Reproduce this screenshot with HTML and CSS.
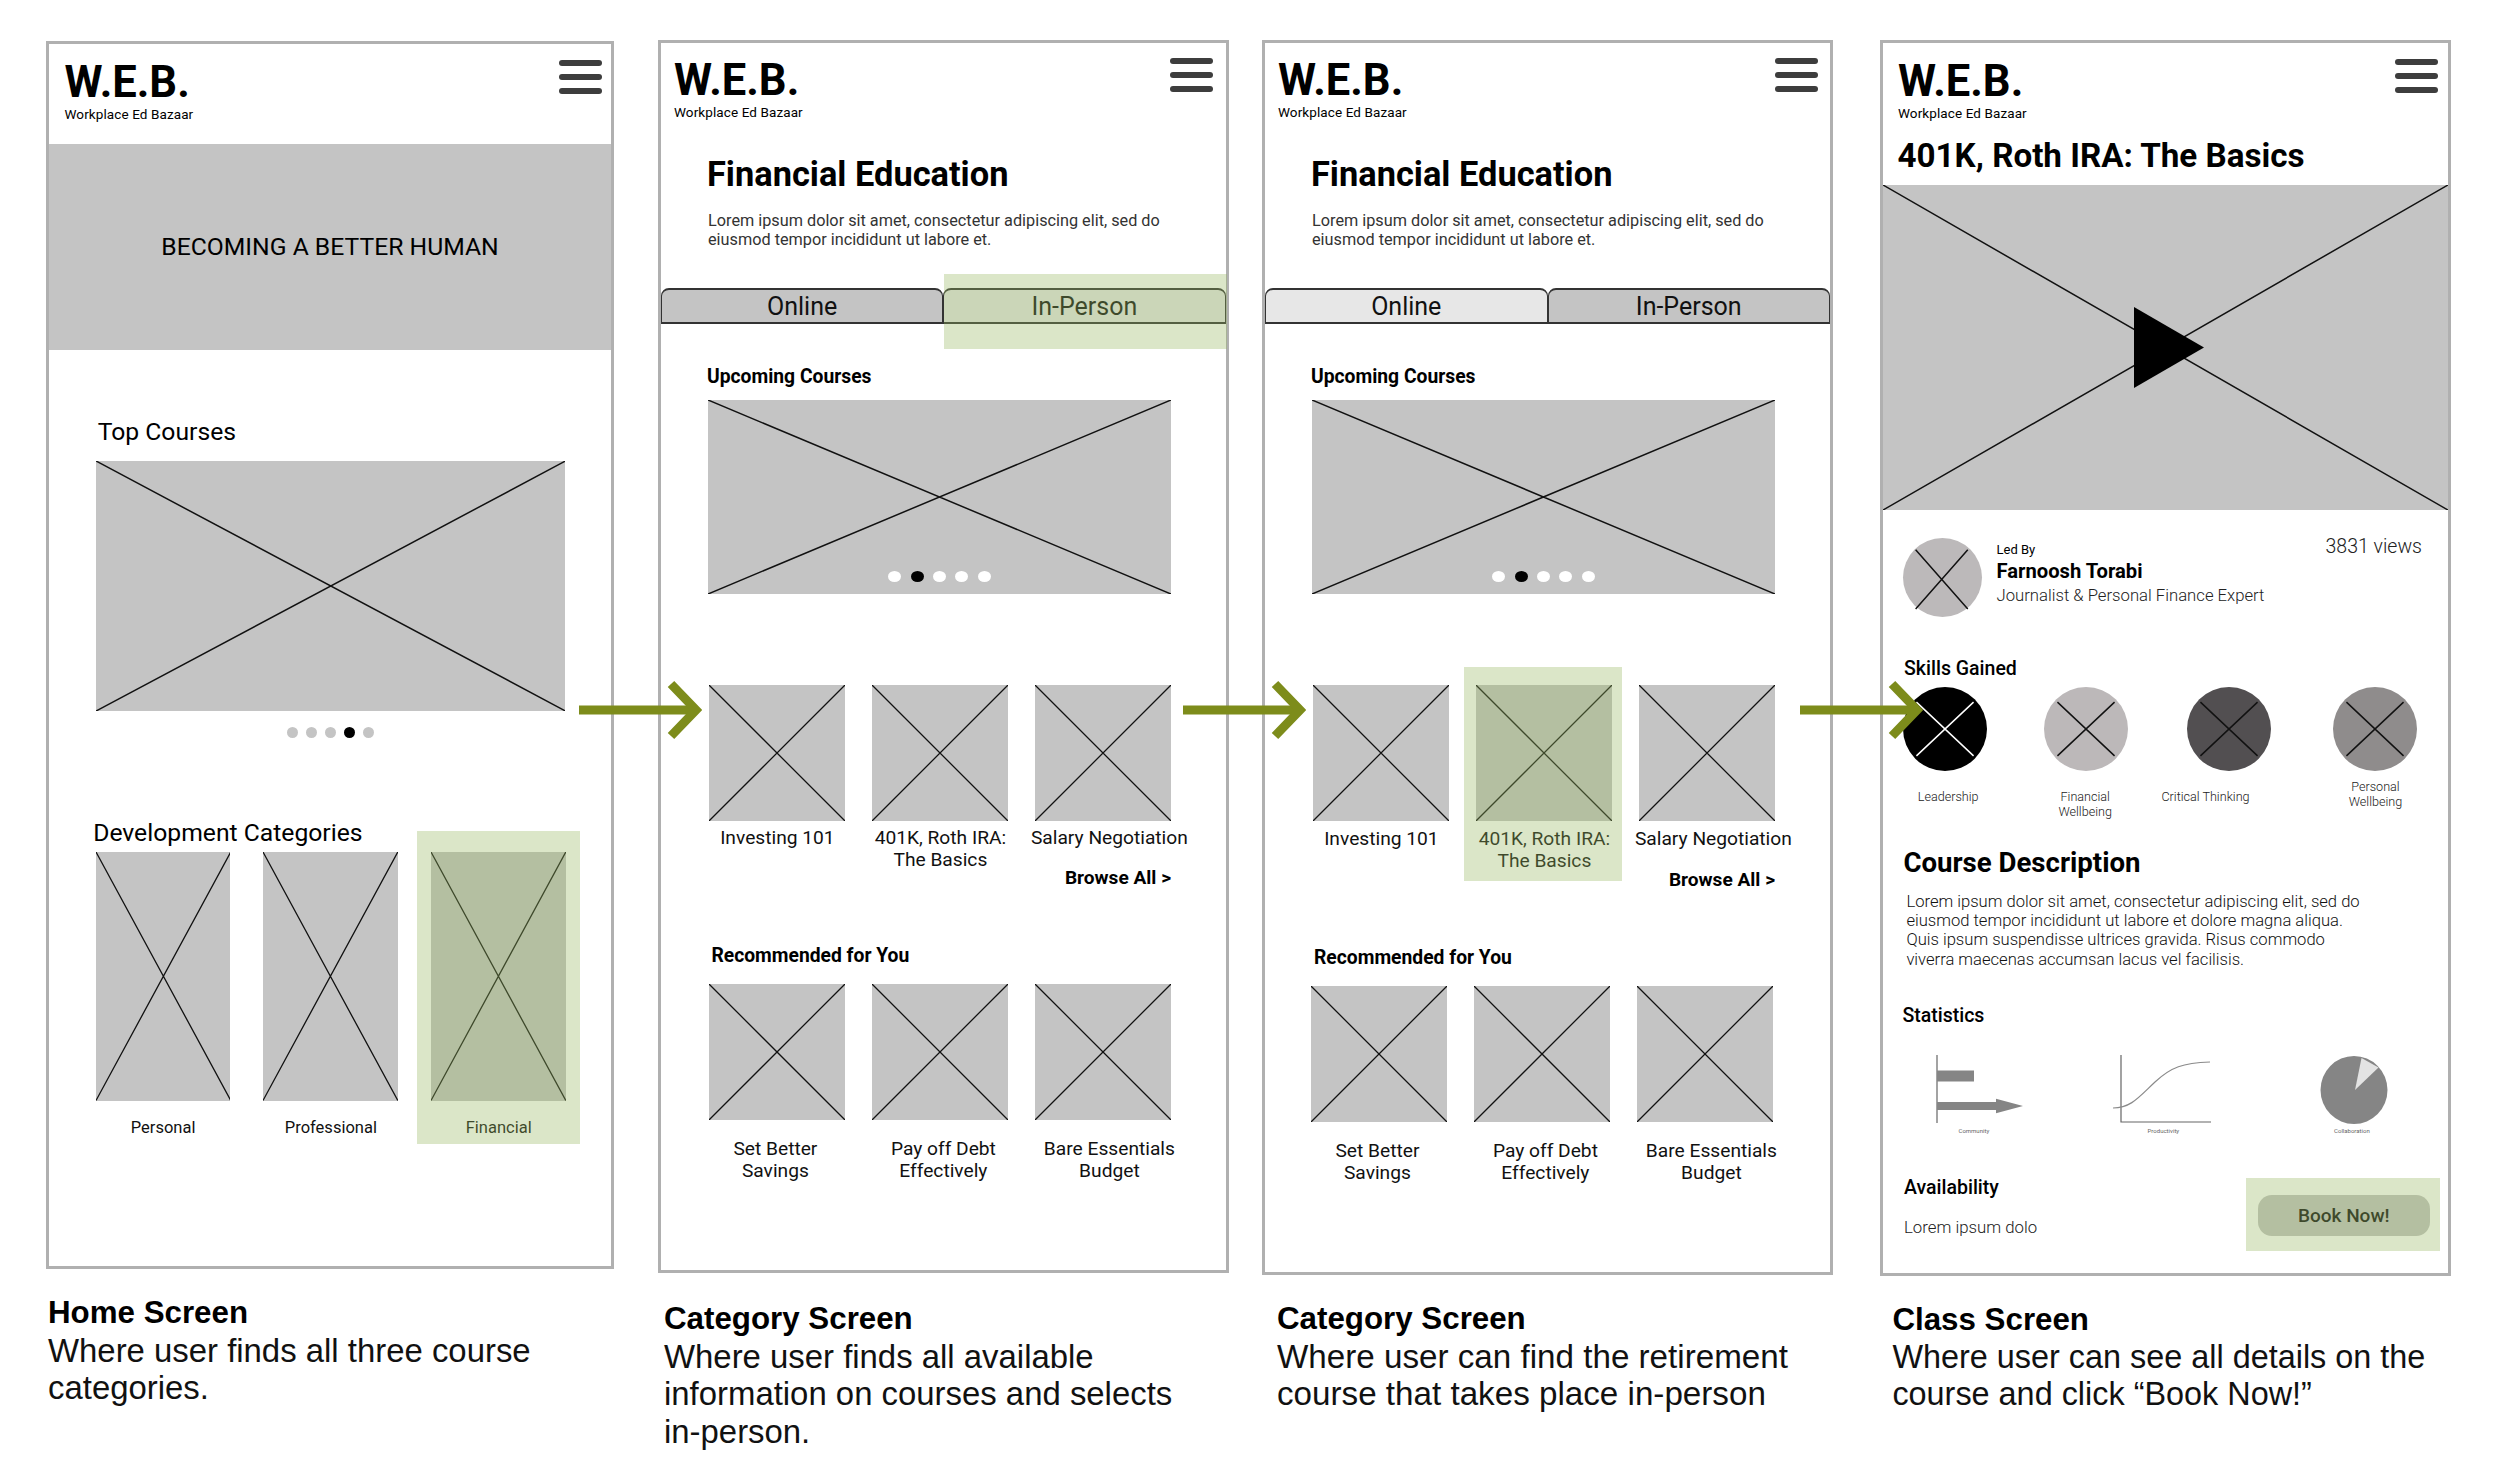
FILE: index.html
```html
<!DOCTYPE html>
<html lang="en">
<head>
<meta charset="utf-8">
<title>W.E.B. wireframes</title>
<link rel="stylesheet" href="styles.css">
</head>
<body>
<main class="board">

  <section class="col col-home">
    <div class="frame frame-home">
      <header class="head">
        <div class="brand"><div class="logo">W.E.B.</div><div class="sub">Workplace Ed Bazaar</div></div>
        <div class="menu"><span></span><span></span><span></span></div>
      </header>
      <div class="hero">BECOMING A BETTER HUMAN</div>
      <div class="home-body">
        <h2 class="home-h home-h-top">Top Courses</h2>
        <div class="ph ph-wide"><svg class="x" viewBox="0 0 100 100" preserveAspectRatio="none"><path d="M0 0L100 100M100 0L0 100"/></svg></div>
        <div class="dots dots-home"><i></i><i></i><i></i><i class="on"></i><i></i></div>
        <h2 class="home-h home-h-dev">Development Categories</h2>
        <div class="cats">
          <div class="cat"><div class="ph ph-cat"><svg class="x" viewBox="0 0 100 100" preserveAspectRatio="none"><path d="M0 0L100 100M100 0L0 100"/></svg></div><div class="cat-label">Personal</div></div>
          <div class="cat"><div class="ph ph-cat"><svg class="x" viewBox="0 0 100 100" preserveAspectRatio="none"><path d="M0 0L100 100M100 0L0 100"/></svg></div><div class="cat-label">Professional</div></div>
          <div class="cat"><div class="ph ph-cat"><svg class="x" viewBox="0 0 100 100" preserveAspectRatio="none"><path d="M0 0L100 100M100 0L0 100"/></svg></div><div class="cat-label">Financial</div><div class="hl hl-cat"></div></div>
        </div>
      </div>
    </div>
    <div class="caption cap-home"><strong>Home Screen</strong><p>Where user finds all three course<br>categories.</p></div>
  </section>

  <section class="col col-cat1">
    <div class="frame frame-cat1">
      <header class="head head-sm">
        <div class="brand"><div class="logo">W.E.B.</div><div class="sub">Workplace Ed Bazaar</div></div>
        <div class="menu"><span></span><span></span><span></span></div>
      </header>
      <div class="intro">
        <h1 class="title">Financial Education</h1>
        <p class="lede">Lorem ipsum dolor sit amet, consectetur adipiscing elit, sed do<br>eiusmod tempor incididunt ut labore et.</p>
      </div>
      <div class="tabs">
        <div class="tab">Online</div>
        <div class="tab tab-light">In-Person<div class="hl hl-tab"></div></div>
      </div>
      <div class="cat-body">
        <h3 class="sec sec-up">Upcoming Courses</h3>
        <div class="ph ph-banner"><svg class="x" viewBox="0 0 100 100" preserveAspectRatio="none"><path d="M0 0L100 100M100 0L0 100"/></svg><div class="dots dots-over"><i></i><i class="on"></i><i></i><i></i><i></i></div></div>
        <div class="row row-a">
          <div class="card"><div class="ph ph-thumb"><svg class="x" viewBox="0 0 100 100" preserveAspectRatio="none"><path d="M0 0L100 100M100 0L0 100"/></svg></div><div class="label">Investing 101</div></div>
          <div class="card"><div class="ph ph-thumb"><svg class="x" viewBox="0 0 100 100" preserveAspectRatio="none"><path d="M0 0L100 100M100 0L0 100"/></svg></div><div class="label">401K, Roth IRA:<br>The Basics</div></div>
          <div class="card"><div class="ph ph-thumb"><svg class="x" viewBox="0 0 100 100" preserveAspectRatio="none"><path d="M0 0L100 100M100 0L0 100"/></svg></div><div class="label nudge-6">Salary Negotiation</div></div>
        </div>
        <div class="browse">Browse All &gt;</div>
        <h3 class="sec sec-rec">Recommended for You</h3>
        <div class="row row-b">
          <div class="card"><div class="ph ph-thumb"><svg class="x" viewBox="0 0 100 100" preserveAspectRatio="none"><path d="M0 0L100 100M100 0L0 100"/></svg></div><div class="label label-b nudge-n2">Set Better<br>Savings</div></div>
          <div class="card"><div class="ph ph-thumb"><svg class="x" viewBox="0 0 100 100" preserveAspectRatio="none"><path d="M0 0L100 100M100 0L0 100"/></svg></div><div class="label label-b nudge-3">Pay off Debt<br>Effectively</div></div>
          <div class="card"><div class="ph ph-thumb"><svg class="x" viewBox="0 0 100 100" preserveAspectRatio="none"><path d="M0 0L100 100M100 0L0 100"/></svg></div><div class="label label-b nudge-6">Bare Essentials<br>Budget</div></div>
        </div>
      </div>
    </div>
    <div class="caption cap-cat1"><strong>Category Screen</strong><p>Where user finds all available<br>information on courses and selects<br>in-person.</p></div>
  </section>

  <section class="col col-cat2">
    <div class="frame frame-cat2">
      <header class="head head-sm">
        <div class="brand"><div class="logo">W.E.B.</div><div class="sub">Workplace Ed Bazaar</div></div>
        <div class="menu"><span></span><span></span><span></span></div>
      </header>
      <div class="intro">
        <h1 class="title">Financial Education</h1>
        <p class="lede">Lorem ipsum dolor sit amet, consectetur adipiscing elit, sed do<br>eiusmod tempor incididunt ut labore et.</p>
      </div>
      <div class="tabs">
        <div class="tab tab-light">Online</div>
        <div class="tab">In-Person</div>
      </div>
      <div class="cat-body">
        <h3 class="sec sec-up">Upcoming Courses</h3>
        <div class="ph ph-banner"><svg class="x" viewBox="0 0 100 100" preserveAspectRatio="none"><path d="M0 0L100 100M100 0L0 100"/></svg><div class="dots dots-over"><i></i><i class="on"></i><i></i><i></i><i></i></div></div>
        <div class="row row-a">
          <div class="card"><div class="ph ph-thumb"><svg class="x" viewBox="0 0 100 100" preserveAspectRatio="none"><path d="M0 0L100 100M100 0L0 100"/></svg></div><div class="label">Investing 101</div></div>
          <div class="card"><div class="ph ph-thumb"><svg class="x" viewBox="0 0 100 100" preserveAspectRatio="none"><path d="M0 0L100 100M100 0L0 100"/></svg></div><div class="label">401K, Roth IRA:<br>The Basics</div><div class="hl hl-card"></div></div>
          <div class="card"><div class="ph ph-thumb"><svg class="x" viewBox="0 0 100 100" preserveAspectRatio="none"><path d="M0 0L100 100M100 0L0 100"/></svg></div><div class="label nudge-6">Salary Negotiation</div></div>
        </div>
        <div class="browse">Browse All &gt;</div>
        <h3 class="sec sec-rec">Recommended for You</h3>
        <div class="row row-b">
          <div class="card"><div class="ph ph-thumb"><svg class="x" viewBox="0 0 100 100" preserveAspectRatio="none"><path d="M0 0L100 100M100 0L0 100"/></svg></div><div class="label label-b nudge-n2">Set Better<br>Savings</div></div>
          <div class="card"><div class="ph ph-thumb"><svg class="x" viewBox="0 0 100 100" preserveAspectRatio="none"><path d="M0 0L100 100M100 0L0 100"/></svg></div><div class="label label-b nudge-3">Pay off Debt<br>Effectively</div></div>
          <div class="card"><div class="ph ph-thumb"><svg class="x" viewBox="0 0 100 100" preserveAspectRatio="none"><path d="M0 0L100 100M100 0L0 100"/></svg></div><div class="label label-b nudge-6">Bare Essentials<br>Budget</div></div>
        </div>
      </div>
    </div>
    <div class="caption cap-cat2"><strong>Category Screen</strong><p>Where user can find the retirement<br>course that takes place in-person</p></div>
  </section>

  <section class="col col-class">
    <div class="frame frame-class">
      <header class="head head-class">
        <div class="brand"><div class="logo">W.E.B.</div><div class="sub">Workplace Ed Bazaar</div></div>
        <div class="menu"><span></span><span></span><span></span></div>
      </header>
      <h1 class="title title-class">401K, Roth IRA: The Basics</h1>
      <div class="ph ph-video">
        <svg class="x" viewBox="0 0 100 100" preserveAspectRatio="none"><path d="M0 0L100 100M100 0L0 100"/></svg>
        <svg class="play" viewBox="0 0 70 81"><path d="M0 0L70 40.5L0 81z"/></svg>
      </div>
      <div class="leader">
        <div class="avatar"><svg class="x" viewBox="0 0 100 100"><path d="M16 15L82 90M82 15L16 90"/></svg></div>
        <div class="leader-text">
          <div class="led">Led By</div>
          <div class="name">Farnoosh Torabi</div>
          <div class="job">Journalist &amp; Personal Finance Expert</div>
        </div>
        <div class="views">3831 views</div>
      </div>
      <h3 class="sub-h sub-skills">Skills Gained</h3>
      <div class="skills">
        <div class="skill"><div class="avatar skill-dot dot-black"><svg class="x" viewBox="0 0 100 100"><path d="M16 18L84 82M84 18L16 82"/></svg></div><div class="skill-label nudge-s4">Leadership</div></div>
        <div class="skill"><div class="avatar skill-dot dot-light"><svg class="x" viewBox="0 0 100 100"><path d="M16 18L84 82M84 18L16 82"/></svg></div><div class="skill-label nudge-sn1">Financial<br>Wellbeing</div></div>
        <div class="skill"><div class="avatar skill-dot dot-dark"><svg class="x" viewBox="0 0 100 100"><path d="M16 18L84 82M84 18L16 82"/></svg></div><div class="skill-label nudge-sn24">Critical Thinking</div></div>
        <div class="skill"><div class="avatar skill-dot dot-mid"><svg class="x" viewBox="0 0 100 100"><path d="M16 18L84 82M84 18L16 82"/></svg></div><div class="skill-label skill-label-up">Personal<br>Wellbeing</div></div>
      </div>
      <h2 class="desc-h">Course Description</h2>
      <p class="desc">Lorem ipsum dolor sit amet, consectetur adipiscing elit, sed do<br>eiusmod tempor incididunt ut labore et dolore magna aliqua.<br>Quis ipsum suspendisse ultrices gravida. Risus commodo<br>viverra maecenas accumsan lacus vel facilisis.</p>
      <h3 class="sub-h sub-stats">Statistics</h3>
      <div class="charts">
        <div class="chart chart-bar">
          <svg class="chart-svg" viewBox="0 0 88 70"><path class="axis" d="M1 0V68"/><path class="fill" d="M1 15.5H38V26.5H1zM1 47H60V43.7L87 51L60 58.300V55H1z"/></svg>
          <div class="chart-label nudge-c13">Community</div>
        </div>
        <div class="chart chart-curve">
          <svg class="chart-svg" viewBox="0 0 100 70"><path class="axis" d="M8 0V67H98"/><path class="line" d="M0 53C18 53 26 42 42 27S70 8 97 7"/></svg>
          <div class="chart-label">Productivity</div>
        </div>
        <div class="chart chart-pie">
          <svg class="chart-svg" viewBox="0 0 69 70"><ellipse class="fill" cx="34" cy="35" rx="33.500" ry="34"/><path class="wedge" d="M35 35L41.500 3L58.500 12.500z"/></svg>
          <div class="chart-label nudge-c6">Collaboration</div>
        </div>
      </div>
      <div class="avail">
        <div class="avail-text">
          <h3 class="sub-h">Availability</h3>
          <div class="avail-note">Lorem ipsum dolo</div>
        </div>
        <div class="book">Book Now!<div class="hl hl-book"></div></div>
      </div>
    </div>
    <div class="caption cap-class"><strong>Class Screen</strong><p>Where user can see all details on the<br>course and click “Book Now!”</p></div>
  </section>

  <svg class="arrow arrow-1" viewBox="0 0 123 60"><path d="M0 30H114"/><path d="M92 4L117 30L92 56"/></svg>
  <svg class="arrow arrow-2" viewBox="0 0 123 60"><path d="M0 30H114"/><path d="M92 4L117 30L92 56"/></svg>
  <svg class="arrow arrow-3" viewBox="0 0 123 60"><path d="M0 30H114"/><path d="M92 4L117 30L92 56"/></svg>
</main>
</body>
</html>
```

FILE: styles.css
```css
* { box-sizing: border-box; }
html, body { margin: 0; padding: 0; background: #fff; }
body { font-family: Roboto, "Liberation Sans", sans-serif; color: #000; overflow: hidden; }
h1, h2, h3, p { margin: 0; font-weight: 400; }

.board { position: relative; display: flex; align-items: flex-start; width: 2500px; height: 1483px; padding: 40px 0 0 46px; }
.col { flex: none; }
.col-home { width: 568px; padding-top: 1px; }
.col-cat1 { width: 570.5px; margin-left: 44px; }
.col-cat2 { width: 571px; margin-left: 33.5px; }
.col-class { width: 571px; margin-left: 47px; }

.frame { position: relative; border: 3px solid #b0b0b0; background: #fff; }
.frame-home { height: 1228px; }
.frame-cat1 { height: 1232.6px; }
.frame-cat2 { height: 1234.7px; }
.frame-class { height: 1235.7px; }

/* header */
.head { display: flex; justify-content: space-between; height: 100px; padding: 17.5px 9px 0 15.5px; }
.head-sm { height: 92px; padding: 16.5px 12.5px 0 13px; }
.head-class { height: 92.7px; padding: 17.5px 10.5px 0 15px; }
.logo { font-size: 43.5px; line-height: 42px; font-weight: 700; }
.sub { font-size: 13.5px; line-height: 16px; margin-top: 2.5px; letter-spacing: .1px; }
.menu { display: flex; flex-direction: column; gap: 8px; width: 43px; margin-top: -1.5px; }
.menu span { display: block; height: 6px; border-radius: 3px; background: #3d3d3d; }

/* placeholders */
.ph { position: relative; background: #c4c4c4; flex: none; }
.x { display: block; width: 100%; height: 100%; }
.x path { fill: none; stroke: #111; stroke-width: 1.5px; vector-effect: non-scaling-stroke; }

/* overlay highlight */
.hl { position: absolute; background: rgba(150, 181, 94, .34); pointer-events: none; }
.hl-cat { inset: -21px -14px -6px -14px; }
.hl-tab { inset: -16px -2px -27px 0; }
.hl-card { inset: -18px -10px -12px -12px; }
.hl-book { inset: -17px -9.5px -15px -11.3px; }

/* home */
.hero { display: flex; align-items: center; justify-content: center; height: 206px; padding-bottom: 2px; background: #c4c4c4; font-size: 24.7px; }
.home-body { padding-left: 46.7px; }
.home-h { font-size: 24.7px; line-height: 30px; }
.home-h-top { margin: 67px 0 14px 2px; }
.home-h-dev { margin: 79.5px 0 4.6px -2.5px; }
.ph-wide { width: 469.5px; height: 250px; }
.dots { display: flex; justify-content: center; gap: 8px; }
.dots i { display: block; width: 11px; height: 11px; border-radius: 50%; background: #c4c4c4; }
.dots i.on { background: #000; }
.dots-home { width: 469.5px; margin-top: 16px; }
.dots-over { position: absolute; left: 0; right: 0; bottom: 12.5px; gap: 9.4px; }
.dots-over i { width: 13px; height: 11px; background: #fff; }
.dots-over i.on { background: #000; }
.cats { display: flex; gap: 33px; }
.cat { position: relative; width: 134.8px; }
.ph-cat { height: 248.5px; }
.ph-cat .x path, .ph-thumb .x path { stroke-width: 1.3px; }
.cat-label { margin-top: 17px; font-size: 16.5px; line-height: 20px; text-align: center; color: #111; }

/* category */
.intro { padding-left: 46px; }
.title { font-size: 34.4px; line-height: 40px; font-weight: 700; }
.intro .title { margin-top: 18.5px; }
.lede { margin-top: 17px; margin-left: 1px; font-size: 16.25px; line-height: 19.2px; color: #333; }
.tabs { display: flex; margin-top: 39.5px; height: 36px; }
.tab { position: relative; flex: 1; display: flex; align-items: center; justify-content: center; background: #c4c4c4; border: 2px solid #333; border-radius: 8px 8px 0 0; border-left-width: 1px; border-right-width: 1px; font-size: 25px; line-height: 1; color: #111; }
.tab-light { background: #e7e7e7; }
.cat-body { padding-left: 47px; }
.sec { font-size: 19.3px; line-height: 22px; font-weight: 700; }
.sec-up { margin-top: 42px; margin-bottom: 12px; margin-left: -1px; }
.ph-banner { width: 463px; height: 194px; }
.row { display: flex; gap: 27px; margin-left: 1.4px; }
.row-a { margin-top: 90.7px; }
.card { position: relative; width: 136px; }
.ph-thumb { height: 136px; }
.label { height: 40px; margin: 6.4px -20px 0; font-size: 19.2px; line-height: 22px; text-align: center; white-space: nowrap; color: #111; }
.label-b { margin-top: 18px; }
.nudge-6 { margin-left: -8px; margin-right: -20px; }
.nudge-3 { margin-left: -14px; margin-right: -20px; }
.nudge-n2 { margin-left: -24px; margin-right: -20px; }
.browse { width: 463px; font-size: 19.1px; line-height: 22px; font-weight: 700; text-align: right; }
.sec-rec { margin: 56px 0 17px 3.4px; }
.frame-cat2 .row-a .label { margin-top: 7px; height: 41px; }
.frame-cat2 .sec-rec { margin-left: 2px; }
.frame-cat2 .row-b { margin-left: -.6px; }
.frame-cat2 .row-b .label { margin-top: 18px; }

/* class */
.title-class { margin: 0 0 9.5px 14.5px; font-size: 33.2px; }
.ph-video { height: 325px; }
.play { position: absolute; left: 251px; top: 122px; width: 70px; height: 81px; }
.play path { fill: #000; }
.leader { display: flex; padding: 28px 26px 0 19.5px; height: 112.8px; }
.avatar { flex: none; width: 79px; height: 79px; border-radius: 50%; background: #bcb9ba; }
.leader-text { margin-left: 15px; padding-top: 3.5px; }
.led { font-size: 13px; line-height: 16px; }
.name { font-size: 20.2px; line-height: 24px; font-weight: 700; margin-top: 1px; }
.job { font-size: 16.7px; line-height: 20px; margin-top: 3px; font-weight: 300; color: #222; }
.views { margin-left: auto; margin-top: -3px; font-size: 19.5px; line-height: 24px; font-weight: 300; height: 24px; color: #222; }
.sub-h { font-size: 19.5px; line-height: 24px; font-weight: 500; }
.sub-skills { margin: 34px 0 6.5px 21px; }
.skills { display: grid; grid-template-columns: 141.7px 143.3px 146px 84px; height: 158.5px; margin-left: 19.5px; }
.skill { width: 84px; }
.skill-dot { width: 84px; height: 84px; }
.dot-black { background: #000; }
.dot-black .x path { stroke: #fff; }
.dot-light { background: #bcb8b9; }
.dot-dark { background: #524f51; }
.dot-mid { background: #8f8c8c; }
.skill-label { margin: 17.7px -23px 0; font-size: 12.6px; line-height: 15.3px; font-weight: 300; text-align: center; white-space: nowrap; color: #222; }
.skill-label-up { margin-top: 7.4px; }
.nudge-s4 { margin-left: -15.6px; }
.nudge-sn1 { margin-left: -25px; }
.nudge-sn24 { margin-left: -71px; }
.desc-h { margin-left: 20.4px; font-size: 27.6px; line-height: 34px; font-weight: 700; }
.desc { margin: 11.8px 0 0 23.4px; font-size: 16.6px; line-height: 19.3px; font-weight: 300; color: #111; }
.sub-stats { margin: 35.3px 0 0 19.4px; }
.charts { display: flex; margin: 26.5px 0 0 53.4px; }
.chart { display: flex; flex-direction: column; align-items: center; }
.chart-bar { width: 88px; }
.chart-curve { width: 100px; margin-left: 89px; }
.chart-pie { width: 69px; margin-left: 107px; }
.chart-svg { display: block; width: 100%; height: 70px; }
.axis { fill: none; stroke: #666; stroke-width: 1.2px; }
.line { fill: none; stroke: #8a8a8a; stroke-width: 1.2px; }
.fill { fill: #858585; }
.wedge { fill: #e3e3e3; }
.chart-label { margin-top: 2.5px; font-size: 6px; line-height: 8px; color: #666; white-space: nowrap; }
.nudge-c13 { margin-right: 13px; }
.nudge-c6 { margin-right: 6px; }
.avail { display: flex; justify-content: space-between; align-items: flex-start; margin: 41px 18px 0 21px; }
.avail-note { margin-top: 15.3px; font-size: 16.8px; line-height: 22px; font-weight: 300; color: #222; }
.book { position: relative; display: flex; align-items: center; justify-content: center; width: 172.5px; height: 41.3px; margin-top: 18.3px; border-radius: 14px; background: #c4c4c4; font-size: 19px; font-weight: 500; color: #111; }

/* captions */
.caption { font-family: "Liberation Sans", Arial, sans-serif; font-size: 32.9px; line-height: 37.5px; color: #111; }
.caption strong { display: block; font-size: 31.3px; font-weight: 700; color: #000; }
.caption p { white-space: nowrap; }
.cap-home { margin: 25px 0 0 2px; }
.cap-cat1 { margin: 27.7px -40px 0 6px; }
.cap-cat2 { margin: 25.5px -40px 0 15px; font-size: 33.2px; }
.cap-class { margin: 25.5px -40px 0 12.4px; font-size: 32.4px; }

/* arrows */
.arrow { position: absolute; top: 679.5px; width: 123px; height: 60px; }
.arrow path { fill: none; stroke: #7d8c1b; stroke-width: 9px; }
.arrow-1 { left: 578.6px; }
.arrow-2 { left: 1183px; }
.arrow-3 { left: 1800px; }
```
